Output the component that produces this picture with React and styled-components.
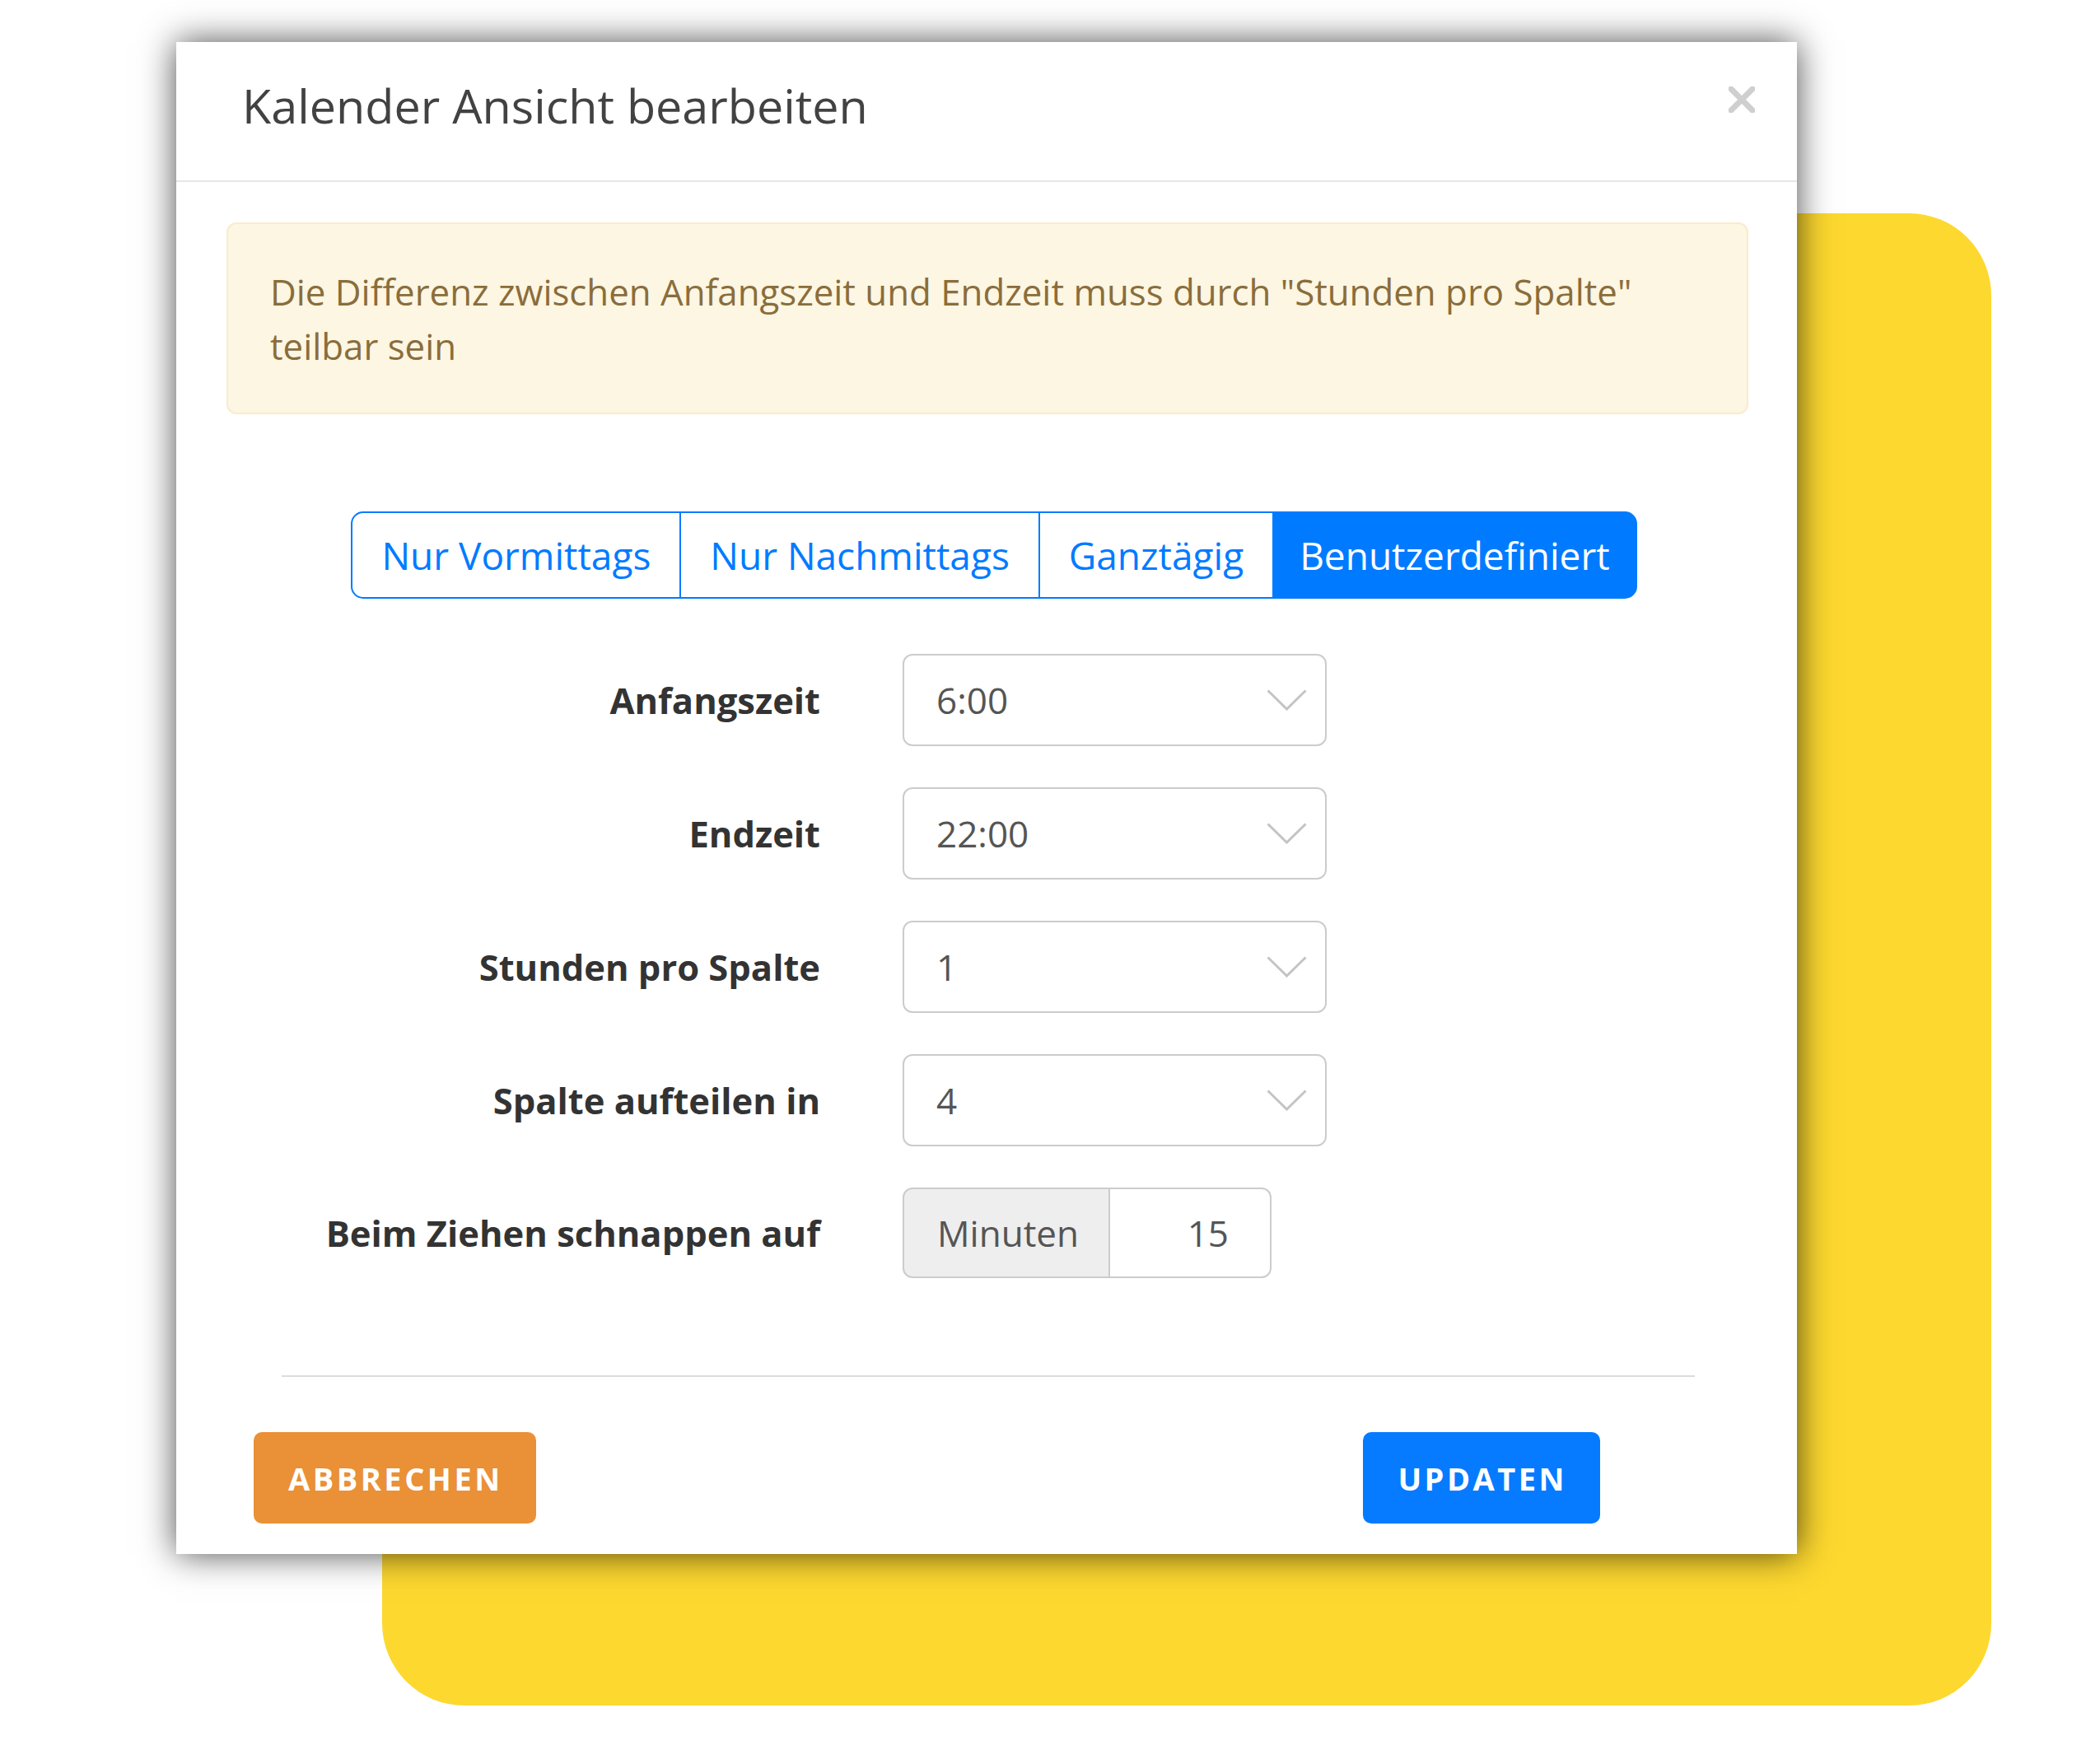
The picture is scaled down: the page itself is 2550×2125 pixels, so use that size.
import React from "react";
import styled, { createGlobalStyle } from "styled-components";

const Global = createGlobalStyle`
  html, body { margin: 0; padding: 0; background: #ffffff; }
  body { font-family: "Open Sans", "Noto Sans", "Liberation Sans", sans-serif; }
  * { box-sizing: border-box; }
`;

const Stage = styled.div`
  width: 2550px;
  height: 2125px;
  overflow: hidden;
  display: grid;
  grid-template-columns: 214px 250px 1718px 236px;
  grid-template-rows: 51px 208px 1628px 184px;
`;

const Backdrop = styled.div`
  grid-column: 3 / 5;
  grid-row: 3 / 5;
  background: #fdd82f;
  border-radius: 100px;
`;

const Dialog = styled.div`
  grid-column: 2 / 4;
  grid-row: 2 / 4;
  z-index: 1;
  background: #ffffff;
  box-shadow: 0 0 40px rgba(0, 0, 0, 0.7);
  display: flex;
  flex-direction: column;
`;

const Header = styled.div`
  height: 170px;
  border-bottom: 2px solid #e6e6e6;
  padding: 43px 51px 0 80px;
  display: flex;
  justify-content: space-between;
  align-items: flex-start;
`;

const Title = styled.h4`
  margin: 0;
  font-size: 57.5px;
  line-height: 68px;
  font-weight: 400;
  color: #424242;
`;

const Close = styled.button`
  margin-top: 11px;
  padding: 0;
  border: 0;
  background: none;
  width: 32px;
  height: 32px;
  display: flex;
`;

const Body = styled.div`
  padding: 49px 59px 0 61px;
  display: flex;
  flex-direction: column;
`;

const Alert = styled.div`
  height: 233px;
  background: #fcf6e2;
  border: 2px solid #faebcc;
  border-radius: 12px;
  padding: 49px 51px 46px;
  color: #8a6d3b;
  font-size: 43.8px;
  line-height: 66px;
`;

const Group = styled.div`
  margin-top: 118px;
  margin-left: 16px;
  align-self: center;
  display: flex;
`;

const Segment = styled.button`
  font-family: inherit;
  font-size: 46px;
  line-height: 62px;
  padding: 20px ${(p) => (p.$active ? "31px" : "35px")};
  border: 2px solid #007bff;
  margin-left: -2px;
  background: ${(p) => (p.$active ? "#007bff" : "#ffffff")};
  color: ${(p) => (p.$active ? "#ffffff" : "#007bff")};
  border-radius: 0;
  &:first-child {
    margin-left: 0;
    border-radius: 15px 0 0 15px;
  }
  &:last-child {
    border-radius: 0 15px 15px 0;
  }
`;

const Form = styled.div`
  margin-top: 67px;
  display: grid;
  grid-template-columns: 721px auto;
  column-gap: 100px;
  row-gap: 50px;
  align-items: center;
`;

const Label = styled.label`
  text-align: right;
  font-weight: 700;
  font-size: 43.5px;
  color: #333333;
`;

const Select = styled.div`
  width: 515px;
  height: 112px;
  border: 2px solid #cccccc;
  border-radius: 12px;
  padding: 0 22px 0 39px;
  display: flex;
  align-items: center;
  justify-content: space-between;
  font-size: 44px;
  color: #555555;
`;

const InputGroup = styled.div`
  display: flex;
  height: 110px;
  width: 448px;
  font-size: 44px;
  color: #555555;
`;

const Addon = styled.div`
  width: 252px;
  background: #eeeeee;
  border: 2px solid #cccccc;
  border-radius: 12px 0 0 12px;
  display: flex;
  align-items: center;
  padding-left: 40px;
`;

const NumberField = styled.div`
  flex: 1;
  border: 2px solid #cccccc;
  border-left: 0;
  border-radius: 0 12px 12px 0;
  display: flex;
  align-items: center;
  justify-content: flex-end;
  padding-right: 50px;
`;

const Divider = styled.hr`
  margin: 118px 65px 0 67px;
  border: 0;
  border-top: 2px solid #dcdcdf;
  height: 0;
`;

const Footer = styled.div`
  margin-top: 67px;
  padding: 0 180px 0 33px;
  display: flex;
  justify-content: space-between;
`;

const ActionButton = styled.button`
  height: 111px;
  padding: 0 40px 0 42px;
  border: 0;
  border-radius: 10px;
  font-family: inherit;
  font-weight: 700;
  font-size: 38px;
  letter-spacing: 3.5px;
  color: #ffffff;
  background: ${(p) => (p.$variant === "primary" ? "#067bff" : "#ea9036")};
`;

const Chevron = () => (
  <svg width="49" height="26" viewBox="0 0 49 26">
    <polyline points="1.5,1.5 24.5,24 47.5,1.5" fill="none" stroke="#c4c4c4" strokeWidth="3" />
  </svg>
);

const CloseIcon = () => (
  <svg width="32" height="32" viewBox="0 0 32 32">
    <path d="M3 3 L29 29 M29 3 L3 29" stroke="#cfcfcf" strokeWidth="7" strokeLinecap="square" />
  </svg>
);

const rows = [
  ["Anfangszeit", "6:00"],
  ["Endzeit", "22:00"],
  ["Stunden pro Spalte", "1"],
  ["Spalte aufteilen in", "4"],
];

export default function App() {
  return (
    <>
      <Global />
      <Stage>
        <Backdrop />
        <Dialog>
          <Header>
            <Title>Kalender Ansicht bearbeiten</Title>
            <Close aria-label="Close">
              <CloseIcon />
            </Close>
          </Header>
          <Body>
            <Alert>
              Die Differenz zwischen Anfangszeit und Endzeit muss durch "Stunden pro Spalte" teilbar sein
            </Alert>
            <Group>
              <Segment>Nur Vormittags</Segment>
              <Segment>Nur Nachmittags</Segment>
              <Segment>Ganztägig</Segment>
              <Segment $active>Benutzerdefiniert</Segment>
            </Group>
            <Form>
              {rows.map(([label, value]) => (
                <React.Fragment key={label}>
                  <Label>{label}</Label>
                  <Select>
                    <span>{value}</span>
                    <Chevron />
                  </Select>
                </React.Fragment>
              ))}
              <Label>Beim Ziehen schnappen auf</Label>
              <InputGroup>
                <Addon>Minuten</Addon>
                <NumberField>15</NumberField>
              </InputGroup>
            </Form>
            <Divider />
            <Footer>
              <ActionButton>ABBRECHEN</ActionButton>
              <ActionButton $variant="primary">UPDATEN</ActionButton>
            </Footer>
          </Body>
        </Dialog>
      </Stage>
    </>
  );
}
